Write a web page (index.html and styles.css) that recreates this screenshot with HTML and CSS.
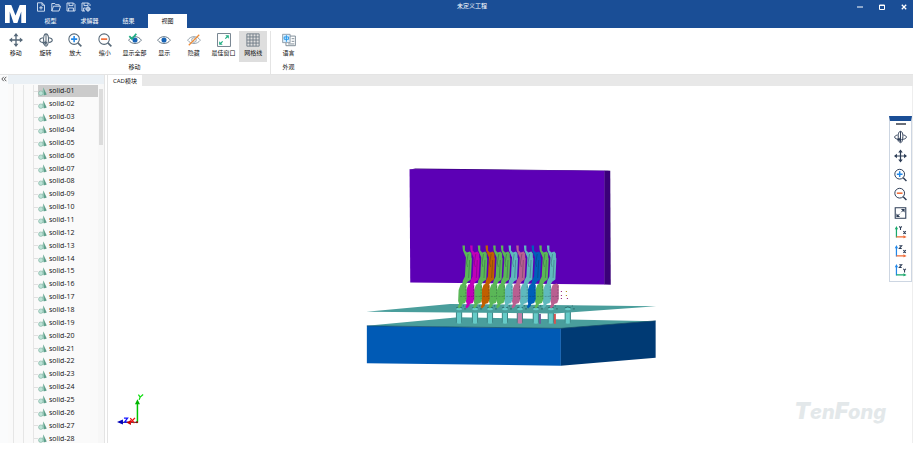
FILE: index.html
```html
<!DOCTYPE html>
<html lang="zh-CN">
<head>
  <meta charset="UTF-8" />
  <meta name="viewport" content="width=device-width, initial-scale=1.0"/>
  <title>未定义工程</title>
  <link rel="stylesheet" href="styles.css">
</head>
<body>

  <!-- shared icons -->
  <svg class="defs" aria-hidden="true">
    <symbol id="i-move" viewBox="0 0 16 16">
      <path d="M8 2v12M2 8h12" stroke="currentColor" stroke-width="1.5"/>
      <path d="M8 0l2.8 3.6H5.2zM8 16l2.8-3.6H5.2zM0 8l3.6-2.8v5.6zM16 8l-3.6-2.8v5.6z" fill="currentColor"/>
    </symbol>
    <symbol id="i-rotate" viewBox="0 0 16 16">
      <g fill="none" stroke="currentColor" stroke-width="1.2">
        <path d="M5.5 11C4.600 4 6 1 8 1s3.500 3 2.700 8.500C10.300 13 9.500 15 8 15c-1 0-1.700-1-2.100-2.200"/>
        <path d="M4.500 5.500C2 6 .8 7 .8 8.200c0 1.600 3 2.800 6.700 2.800M11.500 5.500c2.500.5 3.700 1.500 3.700 2.700 0 1.300-1.500 2.200-4 2.600"/>
        <path d="M8 1v13"/>
      </g>
      <path d="M6.500 8.500l3.300 2.600-3.300 2.500zM3.800 10l3.800.6-2.800 2.900z" fill="currentColor"/>
    </symbol>
    <symbol id="i-zoomin" viewBox="0 0 16 16">
      <g fill="none" stroke="currentColor" stroke-width="1.2"><circle cx="7" cy="7" r="6"/><path d="M11.300 11.300l4 4" stroke-width="1.800"/></g>
      <path class="mark" d="M7 3.500v7M3.500 7h7" stroke="#2187e8" stroke-width="1.800"/>
    </symbol>
    <symbol id="i-zoomout" viewBox="0 0 16 16">
      <g fill="none" stroke="currentColor" stroke-width="1.2"><circle cx="7" cy="7" r="6"/><path d="M11.300 11.300l4 4" stroke-width="1.800"/></g>
      <path d="M3.500 7h7" stroke="#f06a35" stroke-width="1.900"/>
    </symbol>
    <symbol id="i-eye" viewBox="0 0 16 16">
      <path d="M.7 8.200C4.500 2.800 11.500 2.800 15.300 8.200C11.500 13.300 4.500 13.300.7 8.200z" fill="#fff" stroke="currentColor"/>
      <circle cx="8" cy="8" r="2.900" fill="#1763b5"/>
    </symbol>
    <symbol id="i-axis-h" viewBox="0 0 16 16">
      <path d="M3 14h9" stroke="currentColor" stroke-width="1.500"/>
      <path d="M15.500 14l-4-2v4z" fill="currentColor"/>
    </symbol>
    <symbol id="i-axis-v" viewBox="0 0 16 16">
      <path d="M3 14.700V3" stroke="currentColor" stroke-width="1.500"/>
      <path d="M3 .5l-2 4h4z" fill="currentColor"/>
    </symbol>
    <symbol id="i-solid" viewBox="0 0 16 16">
      <path d="M9.500 1L15.500 13.500Q11 16 7.500 13.500z" fill="#5f9f8b"/>
      <path d="M9.500 1L7 13.500l3.500 1z" fill="#a8d5c6"/>
      <circle cx="5" cy="11" r="4" fill="#bde3d7" stroke="#79ad9d"/>
    </symbol>
  </svg>

  <header class="titlebar">
    <svg class="logo" viewBox="0 0 20 17" role="img" aria-label="M"><path d="M0 17V0h6L10 10 14 0h6v17h-4.500V6L11.800 17H8.200L4.500 6v11z" fill="#fff"/></svg>
    <div class="titlebar-left">
      <div class="quick">
        <button aria-label="新建"><svg viewBox="0 0 10 10"><path d="M1.500.8h4.500l2.500 2.400v6h-7zM6 .8v2.400h2.500M5 4v3.600M3.200 5.800h3.600"/></svg></button>
        <button aria-label="打开"><svg viewBox="0 0 10 10"><path d="M.8 9V1.500h3l1 1.200h3.400v1.500M.8 9l1.700-4.800h7L8 9z"/></svg></button>
        <button aria-label="保存"><svg viewBox="0 0 10 10"><path d="M1 1h6.500L9 2.500V9H1zM3 1v2.600h4V1M2.600 9V6h4.800v3"/></svg></button>
        <button aria-label="另存为"><svg viewBox="0 0 10 10"><path d="M9 4V2.500L7.500 1H1v8h3M3 1v2.600h4V1M2.600 9V6h2"/><circle cx="7" cy="7" r="1.900"/><path d="M7 4.300v5.400M4.300 7h5.400"/></svg></button>
      </div>
      <nav class="tabs">
        <button>模型</button>
        <button>求解器</button>
        <button>结果</button>
        <button class="active">视图</button>
      </nav>
    </div>
    <div class="title">未定义工程</div>
    <div class="window-btns">
      <button aria-label="最小化"><svg viewBox="0 0 6 6"><path d="M0 3h6"/></svg></button>
      <button aria-label="最大化"><svg viewBox="0 0 6 6"><path d="M.5 1h5v4.500h-5zM.5 1.500h5"/></svg></button>
      <button aria-label="关闭"><svg viewBox="0 0 6 6"><path d="M.8.800l4.400 4.400M5.200.800L.8 5.200" stroke-width="1.300"/></svg></button>
    </div>
  </header>

  <section class="ribbon">
    <div class="group">
      <div class="tools">
        <button><svg><use href="#i-move"/></svg>移动</button>
        <button><svg><use href="#i-rotate"/></svg>旋转</button>
        <button><svg><use href="#i-zoomin"/></svg>放大</button>
        <button><svg><use href="#i-zoomout"/></svg>缩小</button>
        <button><svg viewBox="0 0 16 16"><use href="#i-eye"/><path d="M1.500 3.500l3 3.300L9.500.8" fill="none" stroke="#1fae83" stroke-width="2"/></svg>显示全部</button>
        <button><svg><use href="#i-eye"/></svg>显示</button>
        <button><svg viewBox="0 0 16 16"><path d="M.7 8.200C4.500 2.800 11.500 2.800 15.300 8.200C11.500 13.300 4.500 13.300.7 8.200z" fill="none" stroke="#8d9aa5"/><circle cx="8" cy="8" r="2.600" fill="none" stroke="#8d9aa5"/><path d="M2 14L14 2" stroke="#f08b35" stroke-width="1.400"/></svg>隐藏</button>
        <button><svg viewBox="0 0 16 16"><path d="M.6.600h14.800v14.800H.6z" fill="#fff" stroke="#71808d" stroke-width="1.100"/><path d="M9.500 6.500L12 4M6.500 9.500L4 12" stroke="#1fae83" stroke-width="1.300"/><path d="M9.500 2.500h4v4zM2.500 9.500v4h4z" fill="#1fae83"/></svg>最佳窗口</button>
        <button class="active"><svg viewBox="0 0 16 16"><path d="M1 1h14v14H1zM4.500 1v14M8 1v14M11.500 1v14M1 4.500h14M1 8h14M1 11.500h14" fill="none" stroke="#6c7884"/></svg>网格线</button>
      </div>
      <div class="group-name">移动</div>
    </div>
    <div class="group group-small">
      <div class="tools">
        <button><svg viewBox="0 0 16 16"><path d="M9 3.500h6.300v11H4.500v-3.500" fill="#fff" stroke="#71808d"/><path d="M.7 1.500h8.600v9.500H.7z" fill="#d9efff" stroke="#71808d" stroke-width=".8"/><path d="M5 2.500v7.500M2.500 4.500h5v2.700h-5z" fill="none" stroke="#2596e8" stroke-width="1.100"/><path d="M11 6.500h3M11 9.500h3M7 12.500h7" fill="none" stroke="#71808d"/></svg>语言</button>
      </div>
      <div class="group-name">外观</div>
    </div>
  </section>

  <main class="workspace">
    <div class="rail"><button aria-label="收起"><svg viewBox="0 0 6 6"><path d="M2.800.800L.8 3l2 2.200M5.300.800l-2 2.200 2 2.200" fill="none" stroke="#333" stroke-width=".8"/></svg></button></div>
    <aside class="sidebar">
      <div class="sidebar-head"></div>
      <div class="tree">
        <ul id="solidList"></ul>
        <div class="scroll"><div class="thumb"></div></div>
      </div>
    </aside>

    <section class="content">
      <div class="doc-tabs"><button>CAD模块</button></div>
      <div class="viewport">
        <svg class="scene" viewBox="107 86 806 357" aria-label="CAD">
          <!-- back block -->
          <path d="M409 169.500L415 168.200 610.500 170.500 605 171z" fill="#39007a"/>
          <path d="M409.300 169L605 170.500V284.500L410 282.500z" fill="#5c00b5"/>
          <path d="M604.700 170.500h5.800L611 284.800l-6.300-.300z" fill="#3a0078"/>
          <!-- base block -->
          <path d="M366.500 326L458 317.500 656 321.300 561 329z" fill="#4a9e9c"/>
          <path d="M366.500 326L561 328.500V366L366.500 363.500z" fill="#005ab5"/>
          <path d="M561 328.500L656 321v37L561 366z" fill="#003a74"/>
          <path d="M366.500 326L561 328.500 656 321" fill="none" stroke="#174f68" stroke-width=".7"/>
          <g id="pegs"></g>
          <!-- upper plate -->
          <path d="M366 311.800L450 304 656.500 306.400 555 313.500z" fill="#4a9e9c"/>
          <g id="pegTops"></g>
          <g id="pins"></g>
          <g fill="#8b1a70"><path d="M561 291h1v1h-1zM561 295h1v1h-1zM561 298h1v1h-1zM567 298h1v1h-1z"/><path d="M566 291h1v1h-1zM566 295h1v1h-1z" fill="#a88400"/></g>
          <!-- axis triad -->
          <path d="M136.500 423V404" stroke="#00c400" stroke-width="1.500"/>
          <path d="M136.500 399.500l-2.500 5h5z" fill="#00b400"/>
          <path d="M137.500 395l1.700 2.500 3-2.700M139.200 397.500l-1 2.700" fill="none" stroke="#0bdc0b" stroke-width="1.200"/>
          <path d="M136.500 422.700H119" stroke="#222" />
          <path d="M116 422.500l6-2.500v5z" fill="#0000b8"/>
          <path d="M123 418.500h3.600l-3 4h3.200" fill="none" stroke="#1515ff" stroke-width="1.300"/>
          <path d="M125.500 423l4.500-2.500v5z" fill="#c00000"/>
          <path d="M129.300 418.500l4.200 5M134 418.300l-5 5.400" stroke="#f01010" stroke-width="1.300"/>
          <circle cx="136" cy="422.700" r="1" fill="#900"/>
        </svg>

        <div class="view-tools">
          <div class="grip"></div>
          <button aria-label="旋转"><svg><use href="#i-rotate"/></svg></button>
          <button aria-label="移动"><svg><use href="#i-move"/></svg></button>
          <button aria-label="放大"><svg><use href="#i-zoomin"/></svg></button>
          <button aria-label="缩小"><svg><use href="#i-zoomout"/></svg></button>
          <button aria-label="最佳窗口"><svg viewBox="0 0 16 16"><path d="M1.500 1.500h13v13h-13z" fill="none" stroke="currentColor" stroke-width="1.300"/><path d="M9 7l3-3M7 9l-3 3" stroke="currentColor" stroke-width="1.200"/><path d="M8.500 3H13v4.500zM3 8.500V13h4.500z" fill="currentColor"/></svg></button>
          <button aria-label="XY 视图"><svg viewBox="0 0 16 16"><use href="#i-axis-v" class="green"/><use href="#i-axis-h" class="orange"/><path class="letter" d="M6.500 1l1.500 2 1.500-2M8 3v2.500M11.500 7l3 3.500M14.500 7l-3 3.500"/></svg></button>
          <button aria-label="XZ 视图"><svg viewBox="0 0 16 16"><use href="#i-axis-v" class="blue"/><use href="#i-axis-h" class="orange"/><path class="letter" d="M6.500 1.500h3l-3 3.500h3M11.500 7l3 3.500M14.500 7l-3 3.500"/></svg></button>
          <button aria-label="YZ 视图"><svg viewBox="0 0 16 16"><use href="#i-axis-v" class="blue"/><use href="#i-axis-h" class="green"/><path class="letter" d="M6.500 1.500h3l-3 3.500h3M11.500 6.500l1.500 2 1.500-2M13 8.500v2.500"/></svg></button>
        </div>

        <div class="brand"><b>T</b>en<b>F</b>ong</div>
      </div>
    </section>
  </main>

  <script>
    // tree rows
    const list = document.getElementById("solidList");
    for (let i = 1; i <= 28; i++) {
      const li = document.createElement("li");
      const name = "solid-" + String(i).padStart(2, "0");
      li.innerHTML = `<button${i === 1 ? ' class="selected"' : ''}><svg><use href="#i-solid"/></svg>${name}</button>`;
      list.appendChild(li);
    }

    // contact pins
    const green = "#5ab757", cyan = "#5fb9bd", pink = "#b95f91";
    const colors = [green, "#c000b8", green, "#c05f00", green, green, cyan, pink, cyan, "#005fb9", green, cyan, pink];
    let pins = "";
    for (let i = colors.length - 1; i >= 0; i--) {
      const x = 463 + i * 7.7;
      const upper = `<path d="M${x - 0.700} 245.500h2.500v5l2 2 3-1 1.500 2v4l.5 1-1 21-3 2-2.500 4h-3.500l1-5 2-4 1-19-3-7z"/>
        <path d="M${x + 5} 254l-1.500 9 1 4M${x + 6.5} 260l-1 18" fill="none" stroke="#123" stroke-opacity=".4" stroke-width=".7"/>`;
      pins += `<g fill="${colors[i]}">${i < 12 ? upper : ""}
        <path d="M${x - 2.500} 284.500l4-1 2 1.500v14l-1.500 4-3 1-.5 2-2.500 2.500-1.500-1.500 1.500-3-1-3 .5-11z"/>
        <path d="M${x - 3} 296.500h6M${x + 2.700} 286v13" fill="none" stroke="#123" stroke-opacity=".35" stroke-width=".7" stroke-dasharray="2 1"/></g>`;
    }
    document.getElementById("pins").innerHTML = pins;

    // support pegs
    const pegX = [459, 475, 490, 505, 520, 536, 551, 568];
    const pegColor = ["#65cbc8", "#65cbc8", "#65cbc8", "#65cbc8", "#c27fa9", "#65cbc8", "#65cbc8", "#65cbc8"];
    let pegs = "", tops = "";
    pegX.forEach((x, i) => {
      pegs += `<path d="M${x - 3} 309h6v14q-3 2-6 0z" fill="${pegColor[i]}"/><path d="M${x + 2.500} 311v12M${x - 2.700} 311v12" stroke="#397e7e" stroke-width=".9"/>`;
      tops += `<ellipse cx="${x}" cy="309" rx="3" ry="1.300" fill="#65cbc8"/><path d="M${x - 3} 308l3-1 3 1M${x + 5} 309h2M${x + 4} 306h1" fill="none" stroke="#245f60" stroke-width=".8"/>`;
    });
    pegs += '<path d="M539 314h2v10h-2z" fill="#6b5d9b"/><path d="M554 314h2v10h-2z" fill="#d65350"/>';
    document.getElementById("pegs").innerHTML = pegs;
    document.getElementById("pegTops").innerHTML = tops;
  </script>

</body>
</html>
```

FILE: styles.css
```css
* {
  box-sizing: border-box;
}

body {
  margin: 0;
  height: 100vh;
  display: flex;
  flex-direction: column;
  font-family: "Open Sans", "Noto Sans CJK SC", sans-serif;
  font-size: 6px;
  line-height: 8px;
  color: #111;
  background: #fff;
}

button {
  font: inherit;
  color: inherit;
  background: none;
  border: none;
  padding: 0;
  cursor: pointer;
}

svg {
  display: block;
}

.defs {
  position: absolute;
  width: 0;
  height: 0;
}

/* title bar */
.titlebar {
  display: grid;
  grid-template-columns: auto 1fr auto 1fr;
  height: 28px;
  color: #fff;
  background: #1a4e96;
}

.logo {
  width: 21px;
  height: 18px;
  margin: 5px 5px 0;
}

.titlebar-left {
  display: flex;
  flex-direction: column;
  justify-content: space-between;
}

.quick {
  display: flex;
  gap: 5px;
  padding: 2px 0 0 5px;
}

.quick svg {
  width: 10px;
  height: 10px;
  fill: none;
  stroke: #dbe6f5;
  stroke-width: 0.9;
}

.tabs {
  display: flex;
}

.tabs button {
  width: 39px;
  height: 14px;
}

.tabs .active {
  color: #111;
  background: #fff;
}

.title {
  padding-top: 2px;
}

.window-btns {
  display: flex;
  justify-content: flex-end;
  align-items: flex-start;
  gap: 16px;
  padding: 4px 6px 0 0;
}

.window-btns svg {
  width: 6px;
  height: 6px;
  fill: none;
  stroke: #fff;
}

/* ribbon */
.ribbon {
  display: flex;
  height: 47px;
  padding: 3px 2px 0;
  border-bottom: 1px solid #e4e4e4;
}

.group {
  width: 269px;
  padding-right: 3px;
  border-right: 1px solid #e4e4e4;
}

.group-small {
  width: 35px;
  padding: 0;
  border: none;
}

.tools {
  display: flex;
  gap: 2px;
}

.tools button {
  flex: 1;
  height: 31px;
  display: flex;
  flex-direction: column;
  align-items: center;
  gap: 2px;
  padding-top: 2px;
  white-space: nowrap;
}

.tools svg {
  width: 14px;
  height: 14px;
  color: #566878;
}

.tools .active {
  background: #dedede;
}

.group-name {
  margin-top: 1px;
  text-align: center;
}

/* workspace */
.workspace {
  flex: 1;
  display: flex;
  min-height: 0;
  margin-bottom: 9px;
}

.rail {
  width: 8px;
  padding: 1px;
  background: #fafbfc;
}

.rail svg {
  width: 6px;
  height: 6px;
}

.sidebar {
  width: 97px;
  display: flex;
  flex-direction: column;
  overflow: hidden;
  border-right: 1px solid #e4e4e4;
}

.sidebar-head {
  height: 9px;
  background: #eaf0f5;
}

.tree {
  flex: 1;
  display: flex;
  min-height: 0;
  background: #fafafa;
}

.tree ul {
  flex: 1;
  display: grid;
  grid-auto-rows: 1fr;
  margin: 0 0 -2px 5px;
  padding: 1px 0 0;
  list-style: none;
  border-left: 1px solid #e6e6e6;
}

.tree li {
  display: flex;
  align-items: center;
  min-height: 0;
  margin-left: 9px;
  border-left: 1px solid #e6e6e6;
}

.tree li::before {
  content: "";
  align-self: stretch;
  width: 4px;
  margin-left: 9px;
  border-left: 1px solid #e6e6e6;
  background: linear-gradient(#e0e0e0, #e0e0e0) left center / 4px 1px no-repeat;
}

.tree button {
  flex: 1;
  display: flex;
  align-items: center;
  gap: 2px;
  height: 12px;
  font-size: 7px;
}

.tree .selected {
  background: #cbcbcb;
}

.tree li svg {
  width: 9px;
  height: 9px;
}

.scroll {
  width: 6px;
  padding: 5px 1px 0;
  background: #f7f7f7;
}

.thumb {
  height: 56px;
  background: #dcdcdc;
}

.content {
  flex: 1;
  display: flex;
  flex-direction: column;
  min-width: 0;
  margin-left: 2px;
  border-left: 1px solid #e4e4e4;
}

.doc-tabs {
  height: 11px;
  background: #e8e8e8;
}

.doc-tabs button {
  width: 34px;
  height: 11px;
  background: #fff;
}

.viewport {
  position: relative;
  flex: 1;
  min-height: 0;
  border-right: 1px solid #eee;
}

.scene {
  width: 100%;
  height: 100%;
}

/* floating view toolbar */
.view-tools {
  position: absolute;
  top: 30px;
  right: 0;
  width: 23px;
  height: 166px;
  display: flex;
  flex-direction: column;
  align-items: center;
  gap: 5px;
  padding-top: 2px;
  background: #fff;
  border: 1px solid #cdd6e2;
  border-top: 5px solid #1a4e96;
}

.view-tools button {
  height: 14px;
}

.view-tools svg {
  width: 13px;
  height: 14px;
  color: #2c3c55;
}

.view-tools .letter {
  fill: none;
  stroke: #2c3c55;
  stroke-width: 1.3;
}

.view-tools .green {
  color: #18a86b;
}

.view-tools .orange {
  color: #f06a35;
}

.view-tools .blue {
  color: #2187e8;
}

.grip {
  width: 10px;
  height: 2px;
  background: #6c7078;
}

.brand {
  position: absolute;
  right: 26px;
  bottom: 20px;
  font-family: Inter, "Liberation Sans", sans-serif;
  font-size: 20px;
  font-weight: 800;
  font-style: italic;
  line-height: 22px;
  color: #e3e8ea;
}

.brand b {
  font-size: 23px;
}
```
